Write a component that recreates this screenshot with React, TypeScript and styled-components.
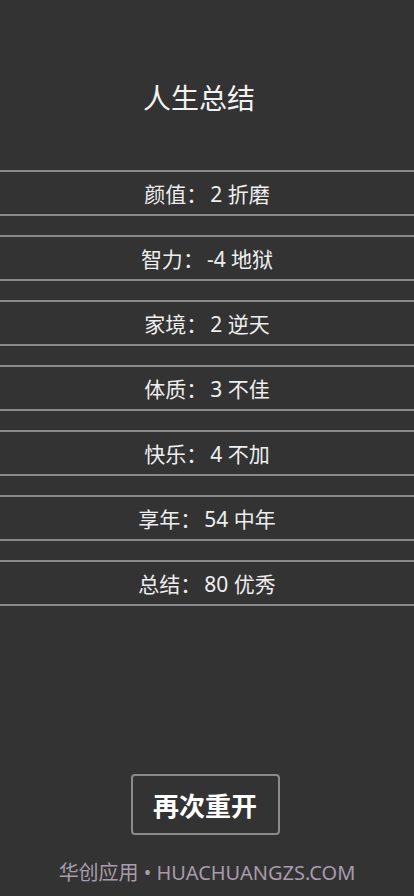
import styled, { createGlobalStyle } from 'styled-components';

const GlobalStyle = createGlobalStyle`
  html, body {
    margin: 0;
    padding: 0;
    background: #333333;
  }
  body {
    font-family: "Noto Sans CJK SC", "Noto Sans", sans-serif;
    color: #eeeeee;
  }
`;

interface Summary {
  label: string;
  value: string;
}

const summaries: Summary[] = [
  { label: '颜值', value: '2 折磨' },
  { label: '智力', value: '-4 地狱' },
  { label: '家境', value: '2 逆天' },
  { label: '体质', value: '3 不佳' },
  { label: '快乐', value: '4 不加' },
  { label: '享年', value: '54 中年' },
  { label: '总结', value: '80 优秀' },
];

const Page = styled.div`
  display: flex;
  flex-direction: column;
  align-items: stretch;
  min-height: 100vh;
  box-sizing: border-box;
`;

const Title = styled.h1`
  margin: 79px 0 0;
  padding-right: 16px;
  height: 36px;
  line-height: 36px;
  font-size: 28px;
  font-weight: 400;
  text-align: center;
  color: #f2f2f2;
`;

const List = styled.ul`
  list-style: none;
  margin: 55px 0 0;
  padding: 0;
  display: flex;
  flex-direction: column;
  gap: 19px;
`;

const Row = styled.li`
  height: 42px;
  line-height: 42px;
  border-top: 2px solid #8a8a8a;
  border-bottom: 2px solid #8a8a8a;
  text-align: center;
  font-size: 21px;
  color: #eeeeee;
`;

const Value = styled.span`
  margin-left: 3px;
  font-family: "Noto Sans", "Noto Sans CJK SC", sans-serif;
  font-size: 21px;
`;

const Bottom = styled.div`
  margin-top: auto;
  display: flex;
  flex-direction: column;
  align-items: center;
  gap: 23px;
  padding-bottom: 8px;
`;

const RestartButton = styled.button`
  width: 149px;
  height: 61px;
  margin-right: 4px;
  box-sizing: border-box;
  border: 2px solid #8a8a8a;
  border-radius: 4px;
  background: transparent;
  color: #ffffff;
  font-family: "Noto Sans CJK SC", "Noto Sans", sans-serif;
  font-size: 26px;
  font-weight: 700;
  cursor: pointer;
`;

const Footer = styled.div`
  height: 30px;
  line-height: 30px;
  font-family: "Noto Sans", "Noto Sans CJK SC", sans-serif;
  font-size: 20px;
  color: #a89bab;
  text-align: center;
`;

export default function App() {
  return (
    <>
      <GlobalStyle />
      <Page>
        <Title>人生总结</Title>
        <List>
          {summaries.map((s) => (
            <Row key={s.label}>
              {s.label}：<Value>{s.value}</Value>
            </Row>
          ))}
        </List>
        <Bottom>
          <RestartButton>再次重开</RestartButton>
          <Footer>华创应用 • HUACHUANGZS.COM</Footer>
        </Bottom>
      </Page>
    </>
  );
}
